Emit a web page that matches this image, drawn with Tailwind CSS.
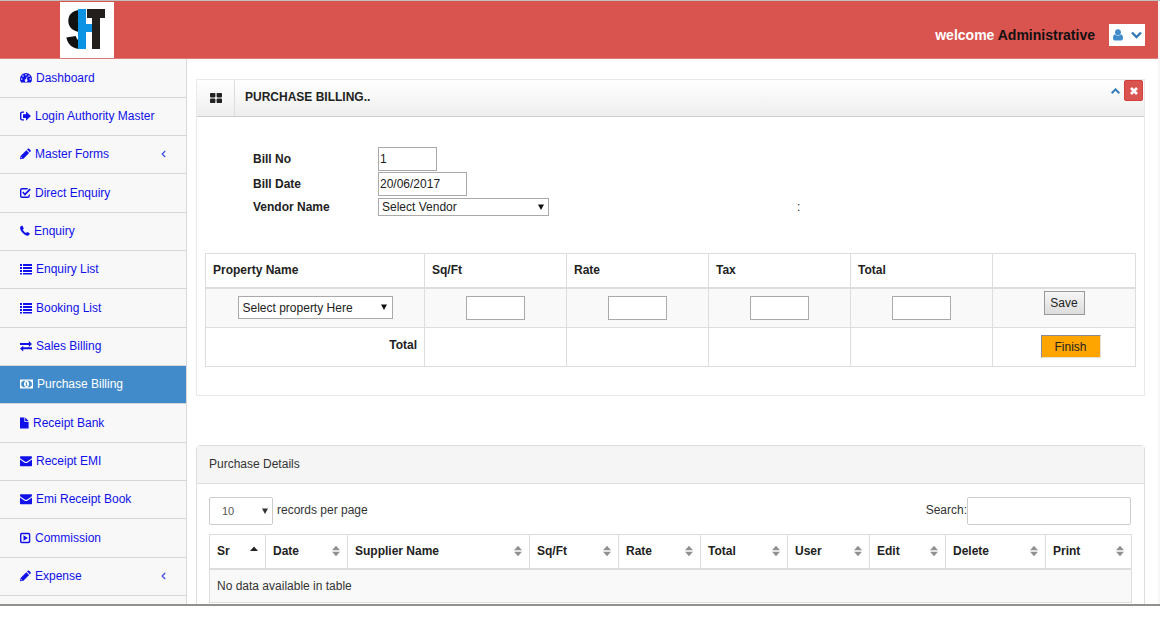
<!DOCTYPE html>
<html lang="en">
<head>
<meta charset="utf-8">
<meta name="viewport" content="width=device-width, initial-scale=1">
<title>Purchase Billing</title>
<script src="https://cdn.jsdelivr.net/npm/@tailwindcss/browser@4"></script>
</head>
<body class="flex h-screen flex-col bg-white pb-[23px] font-['Liberation_Sans',Arial,sans-serif] text-xs text-[#333]">

<!-- Icon set -->
<svg class="hidden">
  <symbol id="i-dash" viewBox="0 0 12 12"><path fill-rule="evenodd" d="M6 1a6 6 0 0 0-6 6c0 1.200.3 2.300.9 3.200.1.200.3.300.5.300h9.200c.2 0 .4-.1.5-.3.6-.9.9-2 .9-3.200a6 6 0 0 0-6-6zM1.700 6.200a.8.8 0 1 1 0 1.600.8.8 0 0 1 0-1.600zM3 3.200A.8.8 0 1 1 3 4.800a.8.8 0 0 1 0-1.600zM6 1.900a.8.8 0 1 1 0 1.600.8.8 0 0 1 0-1.600zM9 3.200A.8.8 0 1 1 9 4.800a.8.8 0 0 1 0-1.600zM10.300 6.200a.8.8 0 1 1 0 1.600.8.8 0 0 1 0-1.600zM6.900 4.400l.7.2-.7 2.700a1.400 1.400 0 1 1-.8-.2z"/></symbol>
  <symbol id="i-out" viewBox="0 0 11 12"><path d="M4 1.500H2.200C1 1.500 0 2.400 0 3.500v5c0 1.100 1 2 2.200 2H4V9.200H2.200c-.5 0-.8-.3-.8-.8V3.600c0-.5.3-.8.8-.8H4z"/><path d="M6 1.500v2.700H3v3.800h3v2.700L10.900 6.100z"/></symbol>
  <symbol id="i-pen" viewBox="0 0 11 12"><path fill-rule="evenodd" d="M0 11.200l.6-3.300L6.300 2.200l2.800 2.800-5.700 5.700zM1.300 8.900l-.3 1.300 1.300-.3zM7 1.500l.8-.8c.4-.4.9-.4 1.300 0l1.500 1.500c.4.400.4.900 0 1.300l-.8.800z"/></symbol>
  <symbol id="i-check" viewBox="0 0 11 12"><path d="M8 1H2A2 2 0 0 0 0 3v6a2 2 0 0 0 2 2h5.800a2 2 0 0 0 2-2V7L8.400 8.300V9c0 .4-.2.600-.6.600H2A.6.6 0 0 1 1.400 9V3c0-.4.2-.6.6-.6h5.300z"/><path d="M2.200 5.600l1.100-1.100 1.600 1.700 4.600-4.700 1.300 1.200-5.900 6z"/></symbol>
  <symbol id="i-phone" viewBox="0 0 10 12"><path d="M9.600 8.300 7.400 7c-.5-.2-1 .9-1.400.9C5 7.600 3 5.600 2.800 4.700c0-.4 1.100-.9.900-1.400L2.600 1C2.300.6.200 1.100.1 2.600c-.4 3.200 4.800 8.400 7.900 8.100 1.400-.2 2-2.200 1.600-2.400z"/></symbol>
  <symbol id="i-list" viewBox="0 0 12 12"><path d="M0 1h2v2H0zM3 1h9v2H3zM0 4h2v2H0zM3 4h9v2H3zM0 7h2v2H0zM3 7h9v2H3zM0 10h2v1.500H0zM3 10h9v1.500H3z"/></symbol>
  <symbol id="i-swap" viewBox="0 0 12 12"><path d="M0 3h8.800V1L12 4 8.800 7V5H0zM12 7.200H3.200V5.800L0 8.500l3.200 3V9.200H12z"/></symbol>
  <symbol id="i-money" viewBox="0 0 13 12"><path fill-rule="evenodd" d="M0 1.500h13v9H0zM1.200 4.200v3.600c.9.100 1.500.7 1.600 1.500h7.400c.1-.8.7-1.400 1.600-1.500V4.200c-.9-.1-1.500-.7-1.600-1.500H2.800c-.1.800-.7 1.400-1.600 1.500z"/><path fill-rule="evenodd" d="M6.500 2.700C5 2.700 3.900 4.200 3.900 6s1.100 3.300 2.600 3.300S9.100 7.800 9.100 6 8 2.700 6.500 2.700zm-.3 1.500H7v2.900h.6v.7H5.400v-.7H6V5.300l-.5.300-.3-.6z"/></symbol>
  <symbol id="i-file" viewBox="0 0 9 12"><path d="M0 .5h4.400v4.200h4.200V11.500H0z"/><path d="M5.200.5l3.400 3.400H5.200z"/></symbol>
  <symbol id="i-mail" viewBox="0 0 12 12"><path d="M0 2.300c0-.6.4-1 1-1h10c.6 0 1 .4 1 1 0 .8-.5 1.300-1.100 1.700L7.200 6.500c-.7.500-1.700.5-2.400 0L1.100 4C.5 3.600 0 3.100 0 2.300z"/><path d="M0 4.500l4.200 2.900c1.100.8 2.500.8 3.600 0L12 4.500v5.800c0 .6-.4 1-1 1H1c-.6 0-1-.4-1-1z"/></symbol>
  <symbol id="i-play" viewBox="0 0 11 12"><path fill-rule="evenodd" d="M1.800.8h6.700a1.800 1.800 0 0 1 1.800 1.800v6.800a1.800 1.800 0 0 1-1.800 1.800H1.800A1.800 1.800 0 0 1 0 9.400V2.600A1.800 1.800 0 0 1 1.800.8zM2 2.300c-.4 0-.6.200-.6.600v6.200c0 .4.2.600.6.600h6.300c.4 0 .6-.2.600-.6V2.900c0-.4-.2-.6-.6-.6z"/><path d="M3.500 3.300l4.300 2.700-4.300 2.700z"/></symbol>
  <symbol id="i-left" viewBox="0 0 5 8"><path d="M4.200 1 1.200 4l3 3" fill="none" stroke="#3b4be0" stroke-width="1.200"/></symbol>
  <symbol id="i-drop" viewBox="0 0 6 6"><path d="M0 .5h6L3 6z"/></symbol>
  <symbol id="i-sort" viewBox="0 0 8 12"><path d="M4 .8l4 4.400H0zM4 11.200 0 6.800h8z"/></symbol>
</svg>

<div class="flex min-h-0 flex-1 flex-col overflow-hidden border-t border-b-2 border-t-[#bfbfbf] border-b-[#90918d] bg-[#f6f6f6] pr-[2px]">

  <header class="flex h-[58px] shrink-0 items-start justify-between border-b border-[#e07a76] bg-[#d9534f] pt-px pr-[13px] pl-[60px]">
    <a href="#" aria-label="SHT home" class="block bg-white">
      <svg class="block" width="54" height="56" viewBox="0 0 54 56">
        <text x="6" y="46" font-family="Liberation Sans Narrow, Liberation Sans, sans-serif" font-weight="bold" font-size="54" fill="#111" stroke="#111" stroke-width="2">S</text>
        <rect x="18" y="4" width="30" height="46" fill="#fff"/>
        <rect x="18" y="7" width="8" height="40" fill="#0c93e4"/>
        <rect x="26" y="22" width="6" height="8" fill="#0c93e4"/>
        <rect x="27" y="7" width="18" height="9" fill="#231f1d"/>
        <rect x="32" y="7" width="8" height="40" fill="#231f1d"/>
      </svg>
    </a>
    <div class="flex items-center pt-[22px]">
      <p class="text-sm font-bold text-white">welcome <span class="text-[#111]">Administrative</span></p>
      <button type="button" aria-label="Account menu" class="ml-3.5 flex h-[22px] w-9 items-center justify-center gap-2 bg-white text-[#337ab7]">
        <svg width="10" height="12" viewBox="0 0 10 12" fill="#428bca"><circle cx="5" cy="3.200" r="2.900"/><path d="M2 5.200C.6 5.400 0 7 0 9c0 1.500.6 2.500 1.800 2.500h6.400C9.400 11.500 10 10.500 10 9c0-2-.6-3.600-2-3.800-.8.9-1.800 1.400-3 1.400s-2.200-.5-3-1.400z"/></svg>
        <svg width="11" height="8" viewBox="0 0 11 8" fill="none" stroke="currentColor" stroke-width="2.400"><path d="M1 1.500l4.500 4.500L10 1.500"/></svg>
      </button>
    </div>
  </header>

  <div class="flex min-h-0 flex-1">
    <nav class="w-[187px] shrink-0 overflow-hidden border-r border-[#d9d9d9] bg-[#f8f8f8] text-[#1010e8]">
      <ul class="[&>li]:h-[38px] [&>li]:border-b [&>li]:border-[#d6d6d6] [&>li:nth-child(3n+1)]:h-[39px] [&_a]:flex [&_a]:h-full [&_a]:items-center [&_a]:gap-1 [&_a]:pb-px [&_a]:pl-5 [&_svg]:fill-current">
        <li><a href="#"><svg width="12" height="12"><use href="#i-dash"/></svg>Dashboard</a></li>
        <li><a href="#"><svg width="11" height="12"><use href="#i-out"/></svg>Login Authority Master</a></li>
        <li><a href="#"><svg width="11" height="12"><use href="#i-pen"/></svg>Master Forms<svg class="mr-5 ml-auto" width="5" height="8"><use href="#i-left"/></svg></a></li>
        <li><a href="#"><svg width="11" height="12"><use href="#i-check"/></svg>Direct Enquiry</a></li>
        <li><a href="#"><svg width="10" height="12"><use href="#i-phone"/></svg>Enquiry</a></li>
        <li><a href="#"><svg width="12" height="12"><use href="#i-list"/></svg>Enquiry List</a></li>
        <li><a href="#"><svg width="12" height="12"><use href="#i-list"/></svg>Booking List</a></li>
        <li><a href="#"><svg width="12" height="12"><use href="#i-swap"/></svg>Sales Billing</a></li>
        <li class="bg-[#428bca] text-white"><a href="#" aria-current="page"><svg width="13" height="12"><use href="#i-money"/></svg>Purchase Billing</a></li>
        <li><a href="#"><svg width="9" height="12"><use href="#i-file"/></svg>Receipt Bank</a></li>
        <li><a href="#"><svg width="12" height="12"><use href="#i-mail"/></svg>Receipt EMI</a></li>
        <li><a href="#"><svg width="12" height="12"><use href="#i-mail"/></svg>Emi Receipt Book</a></li>
        <li><a href="#"><svg width="11" height="12"><use href="#i-play"/></svg>Commission</a></li>
        <li><a href="#"><svg width="11" height="12"><use href="#i-pen"/></svg>Expense<svg class="mr-5 ml-auto" width="5" height="8"><use href="#i-left"/></svg></a></li>
      </ul>
    </nav>

    <main class="min-w-0 flex-1 overflow-hidden bg-white pt-5 pr-[13px] pl-[9px]">
      <section class="border border-[#e9e9e9] pb-7">
        <div class="flex h-[37px] border-b border-[#ccc] bg-linear-to-b from-white to-[#eee] text-[#222]">
          <div class="flex w-[38px] items-center justify-center border-r border-[#ddd] pb-px">
            <svg width="12" height="10" viewBox="0 0 12 10" fill="#222"><rect width="5.400" height="4.400" rx=".8"/><rect x="6.600" width="5.400" height="4.400" rx=".8"/><rect y="5.600" width="5.400" height="4.400" rx=".8"/><rect x="6.600" y="5.600" width="5.400" height="4.400" rx=".8"/></svg>
          </div>
          <h1 class="flex flex-1 items-center pb-0.5 pl-2.5 font-bold">PURCHASE BILLING..</h1>
          <div class="flex items-start gap-1 pr-px">
            <button type="button" aria-label="Collapse" class="pt-2 text-[#337ab7]"><svg width="9" height="6" viewBox="0 0 9 6" fill="none" stroke="currentColor" stroke-width="2"><path d="M.7 5.200l3.800-3.800 3.800 3.800"/></svg></button>
            <button type="button" aria-label="Close" class="flex h-[21px] w-[19px] items-center justify-center rounded-xs border border-[#d43f3a] bg-[#d9534f]"><svg width="8" height="8" viewBox="0 0 8 8" stroke="#fff" stroke-width="2.600"><path d="M1 1l6 6M7 1L1 7"/></svg></button>
          </div>
        </div>

        <form class="px-2 pt-[30px] text-[#222]">
          <div class="grid grid-cols-[125px_419px_1fr] items-center gap-y-px pl-12">
            <label for="billno" class="font-bold">Bill No</label>
            <input id="billno" type="text" value="1" class="col-span-2 h-6 w-[59px] border border-[#aaa] bg-white px-px">
            <label for="billdate" class="font-bold">Bill Date</label>
            <input id="billdate" type="text" value="20/06/2017" class="col-span-2 h-6 w-[89px] border border-[#aaa] bg-white px-px">
            <label for="vendor" class="font-bold">Vendor Name</label>
            <div class="relative mt-px w-[171px]">
              <select id="vendor" class="block h-[18px] w-full appearance-none border border-[#aaa] bg-white pl-[3px]"><option>Select Vendor</option></select>
              <svg class="pointer-events-none absolute top-1.5 right-[5px]" width="6" height="6" fill="#111"><use href="#i-drop"/></svg>
            </div>
            <span>:</span>
          </div>

          <table class="mt-[37px] w-full table-fixed border-collapse [&_td]:border [&_td]:border-[#ddd] [&_th]:border [&_th]:border-[#ddd] [&_th]:px-[7px] [&_th]:text-left">
            <colgroup><col class="w-[219px]"><col class="w-[142px]"><col class="w-[142px]"><col class="w-[142px]"><col class="w-[142px]"><col></colgroup>
            <thead><tr class="h-[34px] border-b-2 border-[#ddd]"><th>Property Name</th><th>Sq/Ft</th><th>Rate</th><th>Tax</th><th>Total</th><th aria-label="Action"></th></tr></thead>
            <tbody>
              <tr class="h-10 bg-[#f9f9f9] text-center [&_input]:h-6 [&_input]:w-[59px] [&_input]:border [&_input]:border-[#aaa] [&_input]:bg-white [&_input]:align-middle">
                <td>
                  <div class="relative mx-auto w-[155px]">
                    <select aria-label="Property" class="block h-[23px] w-full appearance-none border border-[#aaa] bg-white pl-1"><option>Select property Here</option></select>
                    <svg class="pointer-events-none absolute top-2 right-1.5" width="6" height="6" fill="#111"><use href="#i-drop"/></svg>
                  </div>
                </td>
                <td><input type="text" aria-label="Sq/Ft"></td>
                <td><input type="text" aria-label="Rate"></td>
                <td><input type="text" aria-label="Tax"></td>
                <td><input type="text" aria-label="Total"></td>
                <td class="pt-0.5 align-top"><button type="button" class="h-6 w-[41px] border border-[#999] bg-linear-to-b from-[#f6f6f6] to-[#ddd]">Save</button></td>
              </tr>
              <tr class="h-[39px] align-top">
                <td class="px-[7px] pt-[9px] text-right font-bold">Total</td><td></td><td></td><td></td><td></td>
                <td class="pt-[7px] pl-[13px] text-center"><button type="button" class="h-[23px] w-[60px] border border-t-[#8a8a95] border-r-[#e8e0d0] border-b-[#e8e0d0] border-l-[#8a8a95] bg-[#ffa500] leading-none">Finish</button></td>
              </tr>
            </tbody>
          </table>
        </form>
      </section>

      <section class="mt-[49px] rounded-t-sm border border-[#ddd]">
        <h2 class="flex h-[38px] items-center border-b border-[#ddd] bg-[#f5f5f5] px-3 pb-px">Purchase Details</h2>
        <div class="px-3 pt-[13px] pb-8">
          <div class="flex items-center justify-between pr-px">
            <label class="flex items-center gap-1">
              <span class="relative block w-16">
                <select class="block h-7 w-full appearance-none rounded-xs border border-[#ccc] bg-white pl-3 text-[11px] text-[#555]"><option>10</option></select>
                <svg class="pointer-events-none absolute top-[11px] right-[5px]" width="6" height="6" fill="#333"><use href="#i-drop"/></svg>
              </span>
              <span class="pb-0.5">records per page</span>
            </label>
            <label class="flex items-center"><span class="pb-0.5">Search:</span><input type="search" class="h-7 w-[164px] rounded-xs border border-[#ccc] bg-white px-2"></label>
          </div>

          <table class="mt-[9px] w-full table-fixed border-collapse border border-[#ddd] text-[#222] [&_th]:border [&_th]:border-[#ddd] [&_th]:px-[7px] [&_th>div]:flex [&_th>div]:items-center [&_th>div]:justify-between [&_th_svg]:fill-[#909090]">
            <colgroup><col class="w-14"><col class="w-[82px]"><col><col class="w-[89px]"><col class="w-[82px]"><col class="w-[87px]"><col class="w-[82px]"><col class="w-[76px]"><col class="w-[100px]"><col class="w-[86px]"></colgroup>
            <thead><tr class="h-[34px] border-b-2 border-[#ddd]">
              <th><div>Sr<svg class="fill-[#222]!" width="8" height="12" viewBox="0 0 8 12"><path d="M4 1.500l4 4.500H0z"/></svg></div></th>
              <th><div>Date<svg width="8" height="12"><use href="#i-sort"/></svg></div></th>
              <th><div>Supplier Name<svg width="8" height="12"><use href="#i-sort"/></svg></div></th>
              <th><div>Sq/Ft<svg width="8" height="12"><use href="#i-sort"/></svg></div></th>
              <th><div>Rate<svg width="8" height="12"><use href="#i-sort"/></svg></div></th>
              <th><div>Total<svg width="8" height="12"><use href="#i-sort"/></svg></div></th>
              <th><div>User<svg width="8" height="12"><use href="#i-sort"/></svg></div></th>
              <th><div>Edit<svg width="8" height="12"><use href="#i-sort"/></svg></div></th>
              <th><div>Delete<svg width="8" height="12"><use href="#i-sort"/></svg></div></th>
              <th><div>Print<svg width="8" height="12"><use href="#i-sort"/></svg></div></th>
            </tr></thead>
            <tbody><tr class="h-[34px] bg-[#f9f9f9]"><td colspan="10" class="px-[7px] text-[#333]">No data available in table</td></tr></tbody>
          </table>
        </div>
      </section>
    </main>
  </div>
</div>
</body>
</html>
